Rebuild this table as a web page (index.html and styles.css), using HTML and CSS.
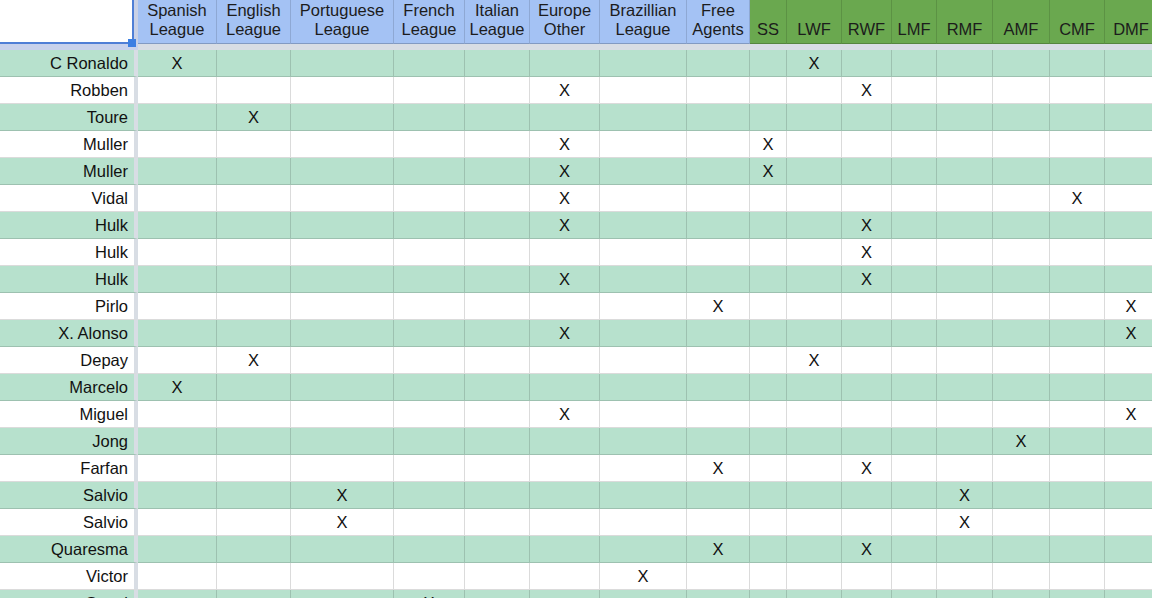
FILE: index.html
```html
<!DOCTYPE html>
<html>
<head>
<meta charset="utf-8">
<link rel="stylesheet" href="styles.css">
</head>
<body>
<div class="sheet">
  <div class="row head">
    <div class="corner"><span class="handle"></span></div>
    <div class="h blue">Spanish<br>League</div>
    <div class="h blue">English<br>League</div>
    <div class="h blue">Portuguese<br>League</div>
    <div class="h blue">French<br>League</div>
    <div class="h blue">Italian<br>League</div>
    <div class="h blue">Europe<br>Other</div>
    <div class="h blue">Brazillian<br>League</div>
    <div class="h blue">Free<br>Agents</div>
    <div class="h green">SS</div>
    <div class="h green">LWF</div>
    <div class="h green">RWF</div>
    <div class="h green">LMF</div>
    <div class="h green">RMF</div>
    <div class="h green">AMF</div>
    <div class="h green">CMF</div>
    <div class="h green">DMF</div>
  </div>
  <div class="freeze"><div class="fz-corner"></div><div class="fz-rest"></div></div>

  <div class="row g"><div class="name">C Ronaldo</div><div class="c">X</div><div class="c"></div><div class="c"></div><div class="c"></div><div class="c"></div><div class="c"></div><div class="c"></div><div class="c"></div><div class="c"></div><div class="c">X</div><div class="c"></div><div class="c"></div><div class="c"></div><div class="c"></div><div class="c"></div><div class="c"></div></div>
  <div class="row w"><div class="name">Robben</div><div class="c"></div><div class="c"></div><div class="c"></div><div class="c"></div><div class="c"></div><div class="c">X</div><div class="c"></div><div class="c"></div><div class="c"></div><div class="c"></div><div class="c">X</div><div class="c"></div><div class="c"></div><div class="c"></div><div class="c"></div><div class="c"></div></div>
  <div class="row g"><div class="name">Toure</div><div class="c"></div><div class="c">X</div><div class="c"></div><div class="c"></div><div class="c"></div><div class="c"></div><div class="c"></div><div class="c"></div><div class="c"></div><div class="c"></div><div class="c"></div><div class="c"></div><div class="c"></div><div class="c"></div><div class="c"></div><div class="c"></div></div>
  <div class="row w"><div class="name">Muller</div><div class="c"></div><div class="c"></div><div class="c"></div><div class="c"></div><div class="c"></div><div class="c">X</div><div class="c"></div><div class="c"></div><div class="c">X</div><div class="c"></div><div class="c"></div><div class="c"></div><div class="c"></div><div class="c"></div><div class="c"></div><div class="c"></div></div>
  <div class="row g"><div class="name">Muller</div><div class="c"></div><div class="c"></div><div class="c"></div><div class="c"></div><div class="c"></div><div class="c">X</div><div class="c"></div><div class="c"></div><div class="c">X</div><div class="c"></div><div class="c"></div><div class="c"></div><div class="c"></div><div class="c"></div><div class="c"></div><div class="c"></div></div>
  <div class="row w"><div class="name">Vidal</div><div class="c"></div><div class="c"></div><div class="c"></div><div class="c"></div><div class="c"></div><div class="c">X</div><div class="c"></div><div class="c"></div><div class="c"></div><div class="c"></div><div class="c"></div><div class="c"></div><div class="c"></div><div class="c"></div><div class="c">X</div><div class="c"></div></div>
  <div class="row g"><div class="name">Hulk</div><div class="c"></div><div class="c"></div><div class="c"></div><div class="c"></div><div class="c"></div><div class="c">X</div><div class="c"></div><div class="c"></div><div class="c"></div><div class="c"></div><div class="c">X</div><div class="c"></div><div class="c"></div><div class="c"></div><div class="c"></div><div class="c"></div></div>
  <div class="row w"><div class="name">Hulk</div><div class="c"></div><div class="c"></div><div class="c"></div><div class="c"></div><div class="c"></div><div class="c"></div><div class="c"></div><div class="c"></div><div class="c"></div><div class="c"></div><div class="c">X</div><div class="c"></div><div class="c"></div><div class="c"></div><div class="c"></div><div class="c"></div></div>
  <div class="row g"><div class="name">Hulk</div><div class="c"></div><div class="c"></div><div class="c"></div><div class="c"></div><div class="c"></div><div class="c">X</div><div class="c"></div><div class="c"></div><div class="c"></div><div class="c"></div><div class="c">X</div><div class="c"></div><div class="c"></div><div class="c"></div><div class="c"></div><div class="c"></div></div>
  <div class="row w"><div class="name">Pirlo</div><div class="c"></div><div class="c"></div><div class="c"></div><div class="c"></div><div class="c"></div><div class="c"></div><div class="c"></div><div class="c">X</div><div class="c"></div><div class="c"></div><div class="c"></div><div class="c"></div><div class="c"></div><div class="c"></div><div class="c"></div><div class="c">X</div></div>
  <div class="row g"><div class="name">X. Alonso</div><div class="c"></div><div class="c"></div><div class="c"></div><div class="c"></div><div class="c"></div><div class="c">X</div><div class="c"></div><div class="c"></div><div class="c"></div><div class="c"></div><div class="c"></div><div class="c"></div><div class="c"></div><div class="c"></div><div class="c"></div><div class="c">X</div></div>
  <div class="row w"><div class="name">Depay</div><div class="c"></div><div class="c">X</div><div class="c"></div><div class="c"></div><div class="c"></div><div class="c"></div><div class="c"></div><div class="c"></div><div class="c"></div><div class="c">X</div><div class="c"></div><div class="c"></div><div class="c"></div><div class="c"></div><div class="c"></div><div class="c"></div></div>
  <div class="row g"><div class="name">Marcelo</div><div class="c">X</div><div class="c"></div><div class="c"></div><div class="c"></div><div class="c"></div><div class="c"></div><div class="c"></div><div class="c"></div><div class="c"></div><div class="c"></div><div class="c"></div><div class="c"></div><div class="c"></div><div class="c"></div><div class="c"></div><div class="c"></div></div>
  <div class="row w"><div class="name">Miguel</div><div class="c"></div><div class="c"></div><div class="c"></div><div class="c"></div><div class="c"></div><div class="c">X</div><div class="c"></div><div class="c"></div><div class="c"></div><div class="c"></div><div class="c"></div><div class="c"></div><div class="c"></div><div class="c"></div><div class="c"></div><div class="c">X</div></div>
  <div class="row g"><div class="name">Jong</div><div class="c"></div><div class="c"></div><div class="c"></div><div class="c"></div><div class="c"></div><div class="c"></div><div class="c"></div><div class="c"></div><div class="c"></div><div class="c"></div><div class="c"></div><div class="c"></div><div class="c"></div><div class="c">X</div><div class="c"></div><div class="c"></div></div>
  <div class="row w"><div class="name">Farfan</div><div class="c"></div><div class="c"></div><div class="c"></div><div class="c"></div><div class="c"></div><div class="c"></div><div class="c"></div><div class="c">X</div><div class="c"></div><div class="c"></div><div class="c">X</div><div class="c"></div><div class="c"></div><div class="c"></div><div class="c"></div><div class="c"></div></div>
  <div class="row g"><div class="name">Salvio</div><div class="c"></div><div class="c"></div><div class="c">X</div><div class="c"></div><div class="c"></div><div class="c"></div><div class="c"></div><div class="c"></div><div class="c"></div><div class="c"></div><div class="c"></div><div class="c"></div><div class="c">X</div><div class="c"></div><div class="c"></div><div class="c"></div></div>
  <div class="row w"><div class="name">Salvio</div><div class="c"></div><div class="c"></div><div class="c">X</div><div class="c"></div><div class="c"></div><div class="c"></div><div class="c"></div><div class="c"></div><div class="c"></div><div class="c"></div><div class="c"></div><div class="c"></div><div class="c">X</div><div class="c"></div><div class="c"></div><div class="c"></div></div>
  <div class="row g"><div class="name">Quaresma</div><div class="c"></div><div class="c"></div><div class="c"></div><div class="c"></div><div class="c"></div><div class="c"></div><div class="c"></div><div class="c">X</div><div class="c"></div><div class="c"></div><div class="c">X</div><div class="c"></div><div class="c"></div><div class="c"></div><div class="c"></div><div class="c"></div></div>
  <div class="row w"><div class="name">Victor</div><div class="c"></div><div class="c"></div><div class="c"></div><div class="c"></div><div class="c"></div><div class="c"></div><div class="c">X</div><div class="c"></div><div class="c"></div><div class="c"></div><div class="c"></div><div class="c"></div><div class="c"></div><div class="c"></div><div class="c"></div><div class="c"></div></div>
  <div class="row g"><div class="name">Stoetl</div><div class="c"></div><div class="c"></div><div class="c"></div><div class="c">X</div><div class="c"></div><div class="c"></div><div class="c"></div><div class="c"></div><div class="c"></div><div class="c"></div><div class="c"></div><div class="c"></div><div class="c"></div><div class="c"></div><div class="c"></div><div class="c"></div></div>
</div>
</body>
</html>
```

FILE: styles.css
```css
html, body {
  margin: 0;
  padding: 0;
  background: #ffffff;
  overflow: hidden;
}

.sheet {
  width: 1160px;
  font-family: "Liberation Sans", Arial, sans-serif;
  font-size: 16.5px;
  color: #111111;
}

.row {
  display: grid;
  grid-template-columns: 138px 79px 74px 103px 71px 65px 70px 87px 63px 37px 55px 50px 45px 56px 57px 55px 53px;
}

.head {
  height: 44px;
}

.corner {
  position: relative;
  background: #ffffff;
  border-right: 4px solid #c9d1e6;
  box-shadow: inset -2px -2px 0 #4f7fd6;
}

.handle {
  position: absolute;
  right: -2px;
  bottom: -3px;
  width: 8px;
  height: 8px;
  background: #3c7fe2;
  z-index: 2;
}

.h {
  display: flex;
  align-items: flex-end;
  justify-content: center;
  text-align: center;
  line-height: 19px;
  padding-bottom: 4px;
  box-sizing: border-box;
  border-right: 1px solid rgba(0, 0, 0, 0.13);
  border-bottom: 1px solid rgba(0, 0, 0, 0.2);
  color: #1c1c1c;
  white-space: nowrap;
}

.blue {
  background: #a4c2f4;
}

.green {
  background: #6aa84f;
}

.freeze {
  display: flex;
  height: 6px;
}

.fz-corner {
  width: 138px;
  background: #c8d2ec;
}

.fz-rest {
  flex: 1;
  background: #d8dde4;
}

.row.g, .row.w {
  height: 27px;
}

.g {
  background: #b7e1cd;
}

.w {
  background: #ffffff;
}

.name {
  box-sizing: border-box;
  text-align: right;
  padding-right: 6px;
  line-height: 26px;
  border-right: 4px solid #d8dde4;
  border-bottom: 1px solid rgba(0, 0, 0, 0.14);
  white-space: nowrap;
}

.c {
  box-sizing: border-box;
  text-align: center;
  line-height: 26px;
  border-right: 1px solid rgba(0, 0, 0, 0.14);
  border-bottom: 1px solid rgba(0, 0, 0, 0.14);
}
```
